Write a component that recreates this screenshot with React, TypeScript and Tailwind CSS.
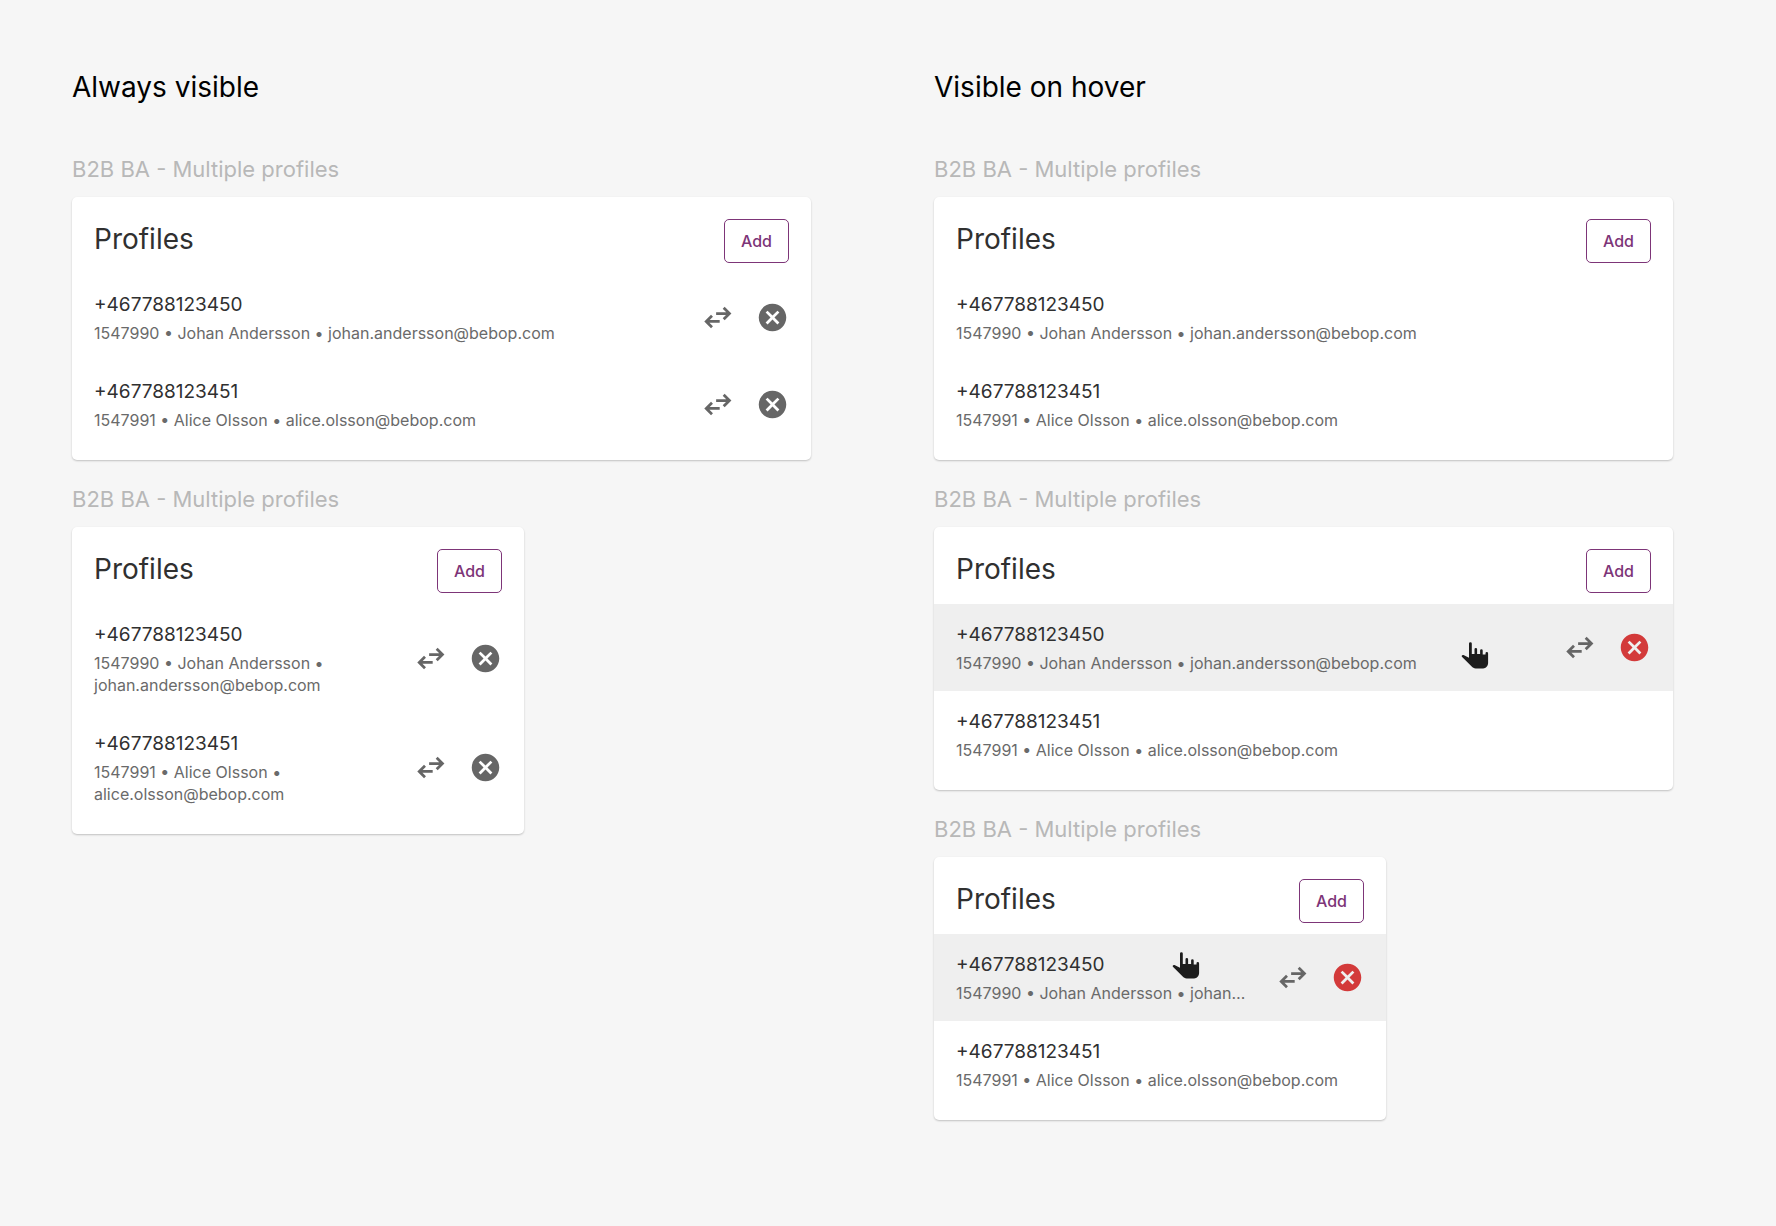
interface Profile {
  phone: string
  id: string
  name: string
  email: string
}

type Actions = 'always' | 'hover'

interface CardProps {
  actions: Actions
  compact?: boolean
  active?: string
  cursor?: string
}

const PROFILES: Profile[] = [
  { phone: '+467788123450', id: '1547990', name: 'Johan Andersson', email: 'johan.andersson@bebop.com' },
  { phone: '+467788123451', id: '1547991', name: 'Alice Olsson', email: 'alice.olsson@bebop.com' },
]

function SwapIcon() {
  return (
    <svg viewBox="0 0 24 24" className="size-[33px]" fill="none" stroke="currentColor" strokeWidth="2">
      <path d="M11 9.1h9.500M16.500 4.900 20.700 9.100l-4.200 4.200" />
      <path d="M13.600 14.900H4M8 10.700 3.800 14.900 8 19.100" />
    </svg>
  )
}

function RemoveIcon() {
  return (
    <svg viewBox="0 0 24 24" className="size-[33px]" fill="currentColor">
      <path d="M12 2C6.47 2 2 6.47 2 12s4.47 10 10 10 10-4.47 10-10S17.53 2 12 2zm5 13.59L15.59 17 12 13.41 8.41 17 7 15.59 10.59 12 7 8.41 8.41 7 12 10.59 15.59 7 17 8.41 13.41 12 17 15.59z" />
    </svg>
  )
}

function HandCursor({ className }: { className: string }) {
  return (
    <svg viewBox="0 0 28 27" className={`absolute h-[27px] w-7 text-[#1c1c1c] ${className}`} fill="currentColor">
      <path d="M8 1.600a1.400 1.400 0 0 1 2.800 0V12h2.700V7.200a1.300 1.300 0 0 1 2.600 0V12h3V8.600a1.300 1.300 0 0 1 2.600 0V12.400h2.800v-1a1.300 1.300 0 0 1 2.600 0v9.600c0 3-2.200 5.400-5 5.400h-7.400c-1.800 0-3-.6-4-1.800L.9 14.800c-.6-1 .4-2.200 1.600-1.700l5.500 2.600z" />
    </svg>
  )
}

function ProfileRow({ profile, actions, compact, active, cursor }: { profile: Profile; actions: Actions; compact?: boolean; active: boolean; cursor?: string }) {
  const showActions = actions === 'always' || active
  const wrap = actions === 'always' && compact
  return (
    <li className={`relative flex items-center gap-7 px-[22px] pt-4 pb-[17px] ${active ? 'bg-[#efefef]' : ''}`}>
      <div className="flex min-w-0 flex-1 flex-col gap-0.5">
        <p className="text-[19px] leading-[30px] text-[#303030]">{profile.phone}</p>
        <p className={`text-base leading-[22px] text-[#6a6a6a] ${wrap ? '' : 'truncate'}`}>
          {profile.id} • {profile.name} • {profile.email}
        </p>
      </div>
      {showActions && (
        <div className="flex gap-[22px] text-[#666666]">
          <button type="button" aria-label={`Switch to ${profile.phone}`}>
            <SwapIcon />
          </button>
          <button type="button" aria-label={`Remove ${profile.phone}`} className={active ? 'text-[#d33a3a]' : ''}>
            <RemoveIcon />
          </button>
        </div>
      )}
      {active && cursor && <HandCursor className={cursor} />}
    </li>
  )
}

function ProfilesCard({ actions, compact, active, cursor }: CardProps) {
  return (
    <section className={compact ? 'w-full max-w-[452px]' : 'w-full'}>
      <h2 className="pb-3 text-[22px] leading-8 text-[#b8b8b8]">B2B BA - Multiple profiles</h2>
      <div className="rounded-[5px] bg-white pb-3 shadow-[0_1px_2px_rgba(0,0,0,0.22)]">
        <div className="flex items-start justify-between px-[22px] pt-[22px] pb-[11px]">
          <h3 className="text-[28px] leading-10 text-[#303030]">Profiles</h3>
          <button type="button" className="h-11 rounded-[5px] border border-[#7d3578] px-4 text-base font-medium text-[#7d3578]">
            Add
          </button>
        </div>
        <ul>
          {PROFILES.map(p => (
            <ProfileRow key={p.id} profile={p} actions={actions} compact={compact} active={p.phone === active} cursor={cursor} />
          ))}
        </ul>
      </div>
    </section>
  )
}

export default function App() {
  return (
    <main className="min-h-screen bg-[#f6f6f6] pt-[69px] pr-[103px] pb-20 pl-[72px] font-['Inter',sans-serif]">
      <div className="grid grid-cols-2 gap-x-[123px]">
        <div>
          <h1 className="text-[28px] leading-9 text-black">Always visible</h1>
          <div className="flex flex-col gap-[23px] pt-12">
            <ProfilesCard actions="always" />
            <ProfilesCard actions="always" compact />
          </div>
        </div>
        <div>
          <h1 className="text-[28px] leading-9 text-black">Visible on hover</h1>
          <div className="flex flex-col gap-[23px] pt-12">
            <ProfilesCard actions="hover" />
            <ProfilesCard actions="hover" active="+467788123450" cursor="top-[38px] right-[184px]" />
            <ProfilesCard actions="hover" compact active="+467788123450" cursor="top-[18px] right-[186px]" />
          </div>
        </div>
      </div>
    </main>
  )
}
